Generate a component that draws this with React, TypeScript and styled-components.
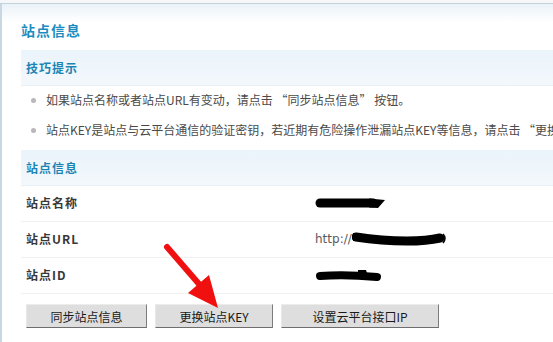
import styled, { createGlobalStyle } from "styled-components";

const GlobalStyle = createGlobalStyle`
  html, body {
    margin: 0;
    padding: 0;
    background: #ffffff;
    overflow: hidden;
  }
  body {
    font-family: "Noto Sans CJK SC", "Liberation Sans", sans-serif;
    font-size: 12px;
    color: #444;
  }
`;

const Page = styled.div`
  position: relative;
  width: 553px;
  height: 342px;
  padding-top: 3px;
  background: #f6f7f8;
  box-sizing: border-box;
  overflow: hidden;
`;

const Frame = styled.div`
  width: 680px;
  height: 339px;
  border-top: 1px solid #c3d3de;
  border-left: 2px solid #c8d7e2;
  background: linear-gradient(to bottom, #eaf2f8 0px, #ffffff 18px);
  box-sizing: border-box;
  padding: 17px 0 0 19px;
`;

const PageTitle = styled.h1`
  margin: 0 0 10px 0;
  height: 19px;
  line-height: 19px;
  font-size: 14px;
  font-weight: bold;
  letter-spacing: 1px;
  color: #1d8cbf;
`;

const SectionBar = styled.div`
  height: 36px;
  line-height: 35px;
  padding-left: 5px;
  background: linear-gradient(to bottom, #eaf4fb, #f3f8fc);
  border-bottom: 1px solid #e8f0f6;
  box-sizing: border-box;
  font-size: 12px;
  font-weight: bold;
  letter-spacing: 1px;
  color: #1b84b3;
`;

const TipList = styled.ul`
  list-style: none;
  margin: 0;
  padding: 0 0 4px 0;
`;

const TipItem = styled.li`
  position: relative;
  height: 28px;
  line-height: 28px;
  margin-bottom: 2px;
  padding-left: 25px;
  white-space: nowrap;
  color: #4a4a4a;

  &::before {
    content: "";
    position: absolute;
    left: 10px;
    top: 12px;
    width: 5px;
    height: 5px;
    border-radius: 50%;
    background: #b8b8b8;
  }
`;

const InfoRow = styled.div`
  display: flex;
  align-items: center;
  height: 36px;
  padding: 0 0 2px 5px;
  border-bottom: 1px solid #f0f0f0;
  box-sizing: border-box;
`;

const Label = styled.div`
  width: 289px;
  font-size: 12px;
  font-weight: bold;
  letter-spacing: 1px;
  color: #383838;
`;

const Value = styled.div`
  display: flex;
  align-items: center;
  color: #5a5a5a;
  font-family: "DejaVu Sans", "Noto Sans CJK SC", sans-serif;
  font-size: 12px;
`;

const ButtonRow = styled.div`
  display: flex;
  gap: 8px;
  padding: 10px 0 0 5px;
`;

const Button = styled.button<{ $w: number }>`
  width: ${({ $w }) => $w}px;
  height: 24px;
  padding: 0;
  background: #dedede;
  border: 1px solid;
  border-color: #ececec #7c7c7c #6e6e6e #e8e8e8;
  font-family: "Noto Sans CJK SC", "Liberation Sans", sans-serif;
  font-size: 12px;
  color: #1a1a1a;
  cursor: pointer;
`;

const ArrowLayer = styled.svg`
  position: absolute;
  left: 0;
  top: 0;
  pointer-events: none;
`;

function Redact({ kind }: { kind: number }) {
  if (kind === 1) {
    return (
      <svg width="72" height="14" viewBox="0 0 72 14">
        <path d="M5 7 L58 7" stroke="#000" strokeWidth="9" strokeLinecap="round" />
        <path d="M54 2.5 L70 4 L63 12 L54 11.5 Z" fill="#000" />
      </svg>
    );
  }
  if (kind === 2) {
    return (
      <svg width="96" height="16" viewBox="0 0 96 16">
        <path d="M4 6 Q30 10 55 10 Q75 10 88 7" stroke="#000" strokeWidth="9" fill="none" strokeLinecap="round" />
        <path d="M1 2 L9 2 L9 10 L1 10 Z" fill="#000" />
        <path d="M91 3 Q95 7 91 12" stroke="#000" strokeWidth="1.5" fill="none" />
      </svg>
    );
  }
  return (
    <svg width="68" height="14" viewBox="0 0 68 14">
      <path d="M5 8 Q30 6 62 9" stroke="#000" strokeWidth="8" fill="none" strokeLinecap="round" />
      <path d="M43 2 L51 2 L53 8 L43 8 Z" fill="#000" />
    </svg>
  );
}

export default function App() {
  return (
    <>
      <GlobalStyle />
      <Page>
        <Frame>
          <PageTitle>站点信息</PageTitle>
          <SectionBar>技巧提示</SectionBar>
          <TipList>
            <TipItem>如果站点名称或者站点URL有变动，请点击 “同步站点信息” 按钮。</TipItem>
            <TipItem>
              站点KEY是站点与云平台通信的验证密钥，若近期有危险操作泄漏站点KEY等信息，请点击 “更换站点KEY” 按钮更换站点KEY。
            </TipItem>
          </TipList>
          <SectionBar>站点信息</SectionBar>
          <InfoRow>
            <Label>站点名称</Label>
            <Value>
              <Redact kind={1} />
            </Value>
          </InfoRow>
          <InfoRow>
            <Label>站点URL</Label>
            <Value>
              http://
              <Redact kind={2} />
            </Value>
          </InfoRow>
          <InfoRow>
            <Label>站点ID</Label>
            <Value>
              <Redact kind={3} />
            </Value>
          </InfoRow>
          <ButtonRow>
            <Button $w={121}>同步站点信息</Button>
            <Button $w={118}>更换站点KEY</Button>
            <Button $w={158}>设置云平台接口IP</Button>
          </ButtonRow>
        </Frame>
        <ArrowLayer width="553" height="342" viewBox="0 0 553 342">
          <line x1="167" y1="247" x2="199" y2="284" stroke="#f01010" strokeWidth="6" strokeLinecap="round" />
          <polygon points="218,308 209,275 188,293" fill="#f01010" />
        </ArrowLayer>
      </Page>
    </>
  );
}
